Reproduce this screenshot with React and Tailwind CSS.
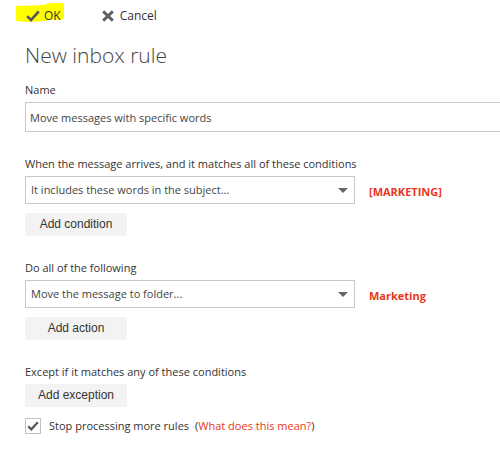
import { useState } from 'react';

const BUTTON_CLASS = 'block h-[23px] w-[102px] bg-[#f3f3f3] text-center font-["Liberation_Sans",Arial,sans-serif] text-[12px] leading-[23px] text-[#333333] hover:bg-[#e6e6e6]';

function CheckIcon({ className }) {
  return (
    <svg viewBox="0 0 14 12" className={className} fill="none" stroke="#555555" strokeWidth="2.6" aria-hidden="true">
      <path d="M1.2 6.2 L5 10 L12.8 1.4" />
    </svg>
  );
}

function CrossIcon({ className }) {
  return (
    <svg viewBox="0 0 12 12" className={className} fill="none" stroke="#606060" strokeWidth="2.9" aria-hidden="true">
      <path d="M1.2 1.4 L10.8 10.6 M10.8 1.4 L1.2 10.6" />
    </svg>
  );
}

function Toolbar() {
  return (
    <div className="flex h-8 items-center gap-10">
      <button type="button" className="relative flex items-center gap-1 pl-px text-[12px] leading-5 text-[#333333]">
        <svg viewBox="0 0 50 20" className="absolute -left-[10px] -top-[3px] h-5 w-[50px]" aria-hidden="true">
          <path d="M1 3 L29 2 Q32 0 38 0 L47 0 Q49 0 49 2 L49 16 Q47 17 33 17 L31 18 L10 19 L1 18 Z" fill="#ffff00" />
        </svg>
        <CheckIcon className="relative h-3 w-3.5" />
        <span className="relative">OK</span>
      </button>
      <button type="button" className="flex items-center gap-1.5 pl-px text-[12px] leading-5 text-[#333333]">
        <CrossIcon className="size-3" />
        <span>Cancel</span>
      </button>
    </div>
  );
}

function RuleSection({ id, label, option, value, addLabel }) {
  return (
    <section className="mt-6">
      <label htmlFor={id} className="block leading-4">{label}</label>
      <div className="mt-1 flex items-center gap-3.5">
        <div className="relative w-[330px] shrink-0">
          <select id={id} className="block h-7 w-full appearance-none border border-[#c8c8c8] bg-white pl-[5px] pr-6 text-[11px] text-[#444444]">
            <option>{option}</option>
          </select>
          <svg viewBox="0 0 10 5" className="pointer-events-none absolute right-[7px] top-3 h-[5px] w-[10px]" aria-hidden="true">
            <path d="M0 0 H10 L5 5 Z" fill="#666666" />
          </svg>
        </div>
        <a href="#" className="pt-1 font-bold text-[#e8381c]">{value}</a>
      </div>
      <button type="button" className={`mt-[9px] ${BUTTON_CLASS}`}>{addLabel}</button>
    </section>
  );
}

export default function App() {
  const [name, setName] = useState('Move messages with specific words');
  const [stop, setStop] = useState(true);

  return (
    <main className='min-h-screen overflow-hidden bg-white pb-6 pl-[25px] font-["Open_Sans","Segoe_UI",sans-serif] text-[11px] text-[#333333]'>
      <Toolbar />
      <h1 className="mt-[7px] text-[21px] font-light leading-8 text-[#444444]">New inbox rule</h1>

      <label htmlFor="rule-name" className="mt-[11px] block leading-4">Name</label>
      <input
        id="rule-name"
        type="text"
        value={name}
        onChange={(e) => setName(e.target.value)}
        className="mt-1 block h-[30px] w-full border border-r-0 border-[#c8c8c8] bg-white px-1 text-[11px] text-[#444444]"
      />

      <RuleSection
        id="rule-condition"
        label="When the message arrives, and it matches all of these conditions"
        option="It includes these words in the subject..."
        value="[MARKETING]"
        addLabel="Add condition"
      />
      <RuleSection
        id="rule-action"
        label="Do all of the following"
        option="Move the message to folder..."
        value="Marketing"
        addLabel="Add action"
      />

      <section className="mt-6">
        <p className="leading-4">Except if it matches any of these conditions</p>
        <button type="button" className={`mt-1 ${BUTTON_CLASS}`}>Add exception</button>
      </section>

      <div className="mt-[11px] flex items-center gap-1.5">
        <label className="flex items-center gap-2 leading-4">
          <span className="relative size-4">
            <input
              type="checkbox"
              checked={stop}
              onChange={(e) => setStop(e.target.checked)}
              className="block size-4 appearance-none border border-[#c0c0c0] bg-white"
            />
            {stop && <CheckIcon className="pointer-events-none absolute left-0.5 top-[3px] h-2.5 w-3" />}
          </span>
          <span>Stop processing more rules</span>
        </label>
        <span className="leading-4">
          (<a href="#" className="text-[#e8381c] hover:underline">What does this mean?</a>)
        </span>
      </div>
    </main>
  );
}
